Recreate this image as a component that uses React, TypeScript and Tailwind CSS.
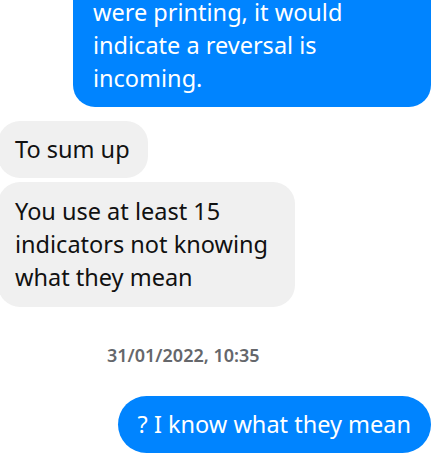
import React from 'react';

const font = { fontFamily: '"Noto Sans", "Open Sans", sans-serif' };

export default function App() {
  return (
    <div className="w-[437px] h-[470px] overflow-hidden bg-white" style={font}>
      <div className="flex flex-col -mt-[30px] pr-[6px]">
        {/* outgoing, cut off at the top */}
        <div className="self-end w-[358px] bg-[#0084ff] text-white rounded-[22px] pt-[26px] pb-[12px] px-[20px] text-[23.5px] leading-[33px]">
          were printing, it would<br />
          indicate a reversal is<br />
          incoming.
        </div>

        {/* incoming group */}
        <div className="flex flex-col items-start gap-[4px] mt-[14px] -ml-[2px]">
          <div className="bg-[#f0f0f0] text-[#111] rounded-[22px] pl-[17px] pr-[18px] py-[12px] text-[23.5px] leading-[33px]">
            To sum up
          </div>
          <div className="w-[297px] bg-[#f0f0f0] text-[#111] rounded-[22px] pl-[17px] pr-[18px] py-[13px] text-[23.5px] leading-[33px]">
            You use at least 15<br />
            indicators not knowing<br />
            what they mean
          </div>
        </div>

        <div className="mt-[35px] pl-[107px] text-[18px] leading-[26px] font-semibold text-[#65676b]">
          31/01/2022, 10:35
        </div>

        <div className="self-end mt-[28px] bg-[#0084ff] text-white rounded-full px-[20px] py-[12px] text-[23.5px] leading-[33px]">
          ? I know what they mean
        </div>
      </div>
    </div>
  );
}
